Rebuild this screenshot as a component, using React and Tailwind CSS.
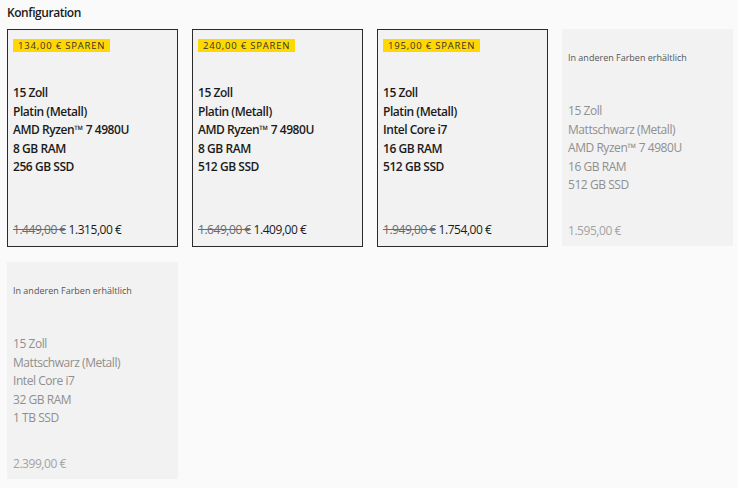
const configs = [
  {
    save: "134,00 € SPAREN",
    specs: ["15 Zoll", "Platin (Metall)", "AMD Ryzen™ 7 4980U", "8 GB RAM", "256 GB SSD"],
    oldPrice: "1.449,00 €",
    price: "1.315,00 €",
  },
  {
    save: "240,00 € SPAREN",
    specs: ["15 Zoll", "Platin (Metall)", "AMD Ryzen™ 7 4980U", "8 GB RAM", "512 GB SSD"],
    oldPrice: "1.649,00 €",
    price: "1.409,00 €",
  },
  {
    save: "195,00 € SPAREN",
    specs: ["15 Zoll", "Platin (Metall)", "Intel Core i7", "16 GB RAM", "512 GB SSD"],
    oldPrice: "1.949,00 €",
    price: "1.754,00 €",
  },
  {
    other: true,
    specs: ["15 Zoll", "Mattschwarz (Metall)", "AMD Ryzen™ 7 4980U", "16 GB RAM", "512 GB SSD"],
    price: "1.595,00 €",
  },
  {
    other: true,
    specs: ["15 Zoll", "Mattschwarz (Metall)", "Intel Core i7", "32 GB RAM", "1 TB SSD"],
    price: "2.399,00 €",
  },
];

const OfferCard = ({ c }) => (
  <div className="flex h-[218px] flex-col border border-[#2b2b2b] bg-[#f2f2f2] px-[5px] pt-[9px]">
    <div className="flex">
      <span className="h-[13px] bg-[#ffd800] px-[5px] text-[9.5px] leading-[13px] tracking-[0.8px] text-[#333]">
        {c.save}
      </span>
    </div>
    <div className="mt-[32px] flex flex-col">
      {c.specs.map((s) => (
        <p key={s} className="text-[12px] font-semibold leading-[18.5px] tracking-[-0.45px] text-[#1b1b1b]">
          {s}
        </p>
      ))}
    </div>
    <p className="mt-[44px] text-[12px] leading-[18.5px] tracking-[-0.45px] text-[#1b1b1b]">
      <span className="text-[#6b6b6b] line-through">{c.oldPrice}</span> {c.price}
    </p>
  </div>
);

const OtherCard = ({ c }) => (
  <div className="flex h-[217px] flex-col bg-[#f2f2f2] px-[6px] pt-[22px]">
    <p className="text-[9px] leading-[13px] text-[#555]">In anderen Farben erhältlich</p>
    <div className="mt-[38px] flex flex-col">
      {c.specs.map((s) => (
        <p key={s} className="text-[12px] leading-[18.5px] tracking-[-0.45px] text-[#8f8f8f]">
          {s}
        </p>
      ))}
    </div>
    <p className="mt-[27px] text-[12px] leading-[18.5px] tracking-[-0.45px] text-[#a3a3a3]">{c.price}</p>
  </div>
);

export default function App() {
  return (
    <div
      className="min-h-[488px] w-[738px] bg-[#fafafa] px-[7px] pt-[4px]"
      style={{ fontFamily: '"Open Sans", "Noto Sans", sans-serif' }}
    >
      <h2 className="text-[12px] font-semibold leading-[18px] tracking-[-0.45px] text-[#1b1b1b]">Konfiguration</h2>
      <div className="mt-[7px] grid grid-cols-[171px_171px_171px_171px] gap-x-[14px] gap-y-[15px]">
        {configs.map((c, i) =>
          c.other ? <OtherCard key={i} c={c} /> : <OfferCard key={i} c={c} />
        )}
      </div>
    </div>
  );
}
